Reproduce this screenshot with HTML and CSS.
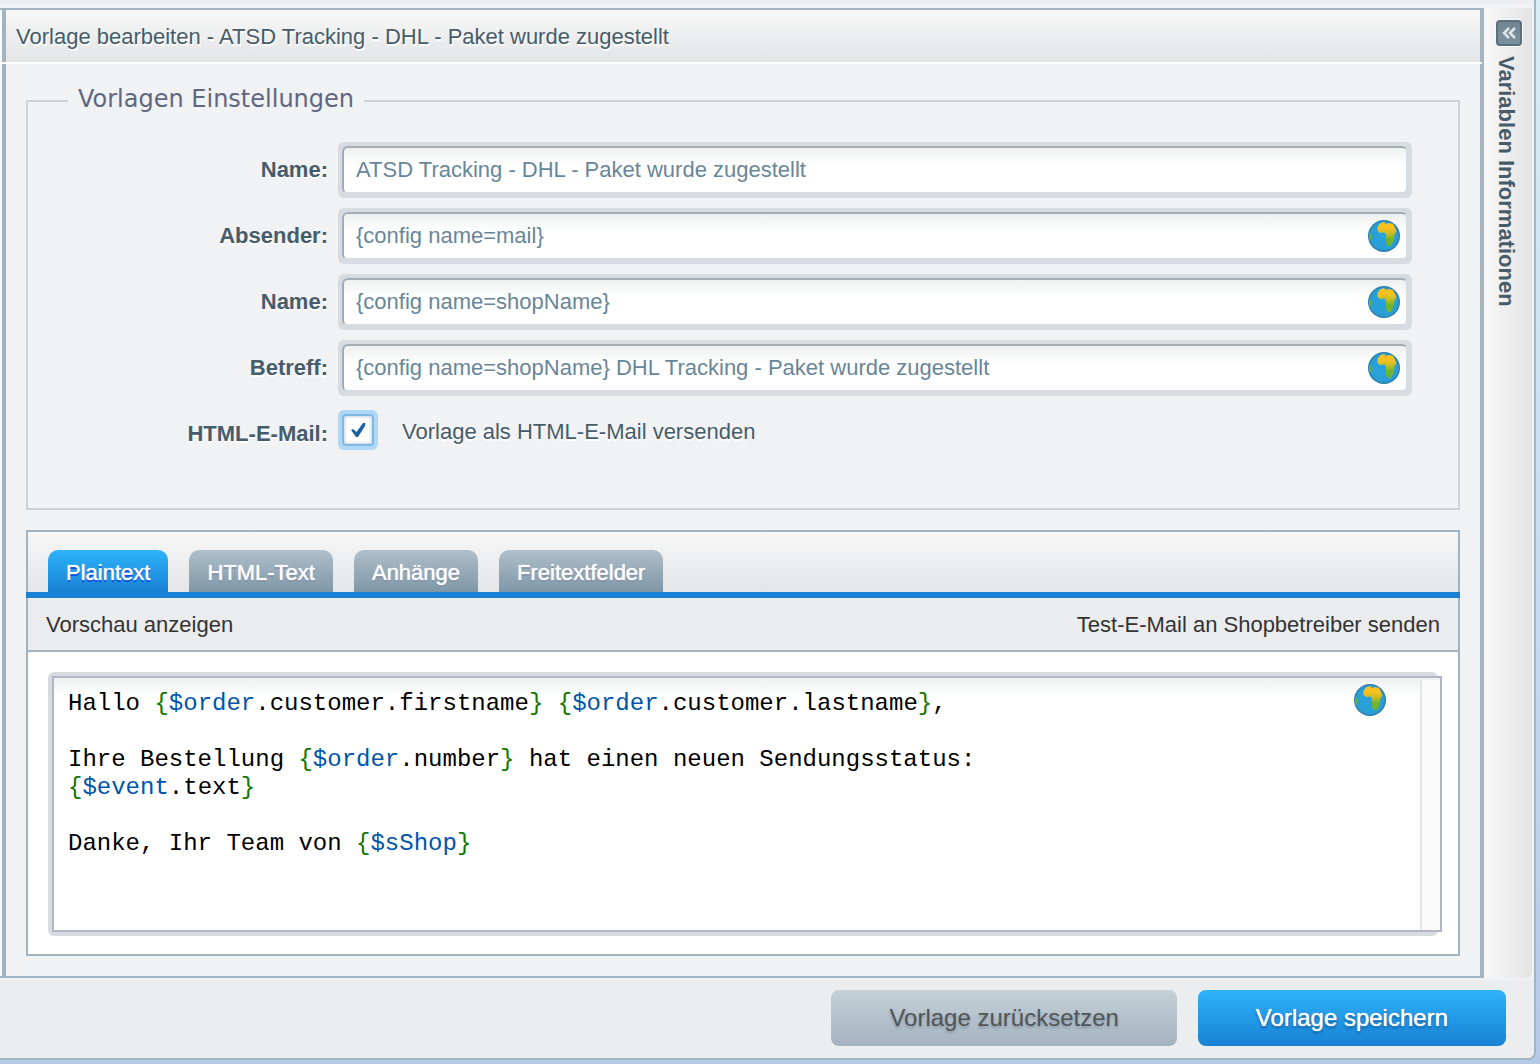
FILE: index.html
```html
<!DOCTYPE html>
<html lang="de">
<head>
<meta charset="utf-8">
<meta name="viewport" content="width=device-width, initial-scale=1">
<title>Vorlage bearbeiten</title>
<link rel="stylesheet" href="styles.css">
</head>
<body>
<svg class="defs" aria-hidden="true">
  <defs>
    <radialGradient id="sea" cx="50%" cy="50%" r="50%">
      <stop offset="0" stop-color="#27a3dc"/>
      <stop offset="0.85" stop-color="#2a9dd6"/>
      <stop offset="1" stop-color="#2b789f"/>
    </radialGradient>
    <linearGradient id="land" x1="0" y1="0" x2="0" y2="1">
      <stop offset="0.25" stop-color="#f8c120"/>
      <stop offset="0.45" stop-color="#cdbd22"/>
      <stop offset="0.7" stop-color="#6fb52c"/>
    </linearGradient>
    <symbol id="globe" viewBox="0 0 32 32">
      <circle cx="16" cy="16" r="16" fill="url(#sea)"/>
      <path fill="url(#land)" d="M9.500 7 L12 3.500 L16 2 L18 4 L21 3 L25 4 L27 8 L28.500 11.500 L26.500 14 L26 19 L24 24 L22 26.500 L19 25.500 L18 22 L18 15 L16.500 12.500 L12 13 L9.500 11 Z"/>
      <path fill="#5fae4a" d="M1 13 L3 14 L4.500 17 L3 20 L1 21 Z"/>
    </symbol>
  </defs>
</svg>
<div class="window">
  <div class="workspace">
    <main class="panel">
      <div class="panel-inner">
        <h1 class="panel-title">Vorlage bearbeiten - ATSD Tracking - DHL - Paket wurde zugestellt</h1>
        <form class="panel-body" id="template-form">
          <fieldset class="settings">
            <legend>Vorlagen Einstellungen</legend>
            <div class="row">
              <label class="row-label" for="name">Name:</label>
              <div class="field"><input class="field-input" id="name" type="text" value="ATSD Tracking - DHL - Paket wurde zugestellt"></div>
            </div>
            <div class="row">
              <label class="row-label" for="sender">Absender:</label>
              <div class="field"><input class="field-input" id="sender" type="text" value="{config name=mail}"><svg class="globe field-globe"><use href="#globe"/></svg></div>
            </div>
            <div class="row">
              <label class="row-label" for="sender-name">Name:</label>
              <div class="field"><input class="field-input" id="sender-name" type="text" value="{config name=shopName}"><svg class="globe field-globe"><use href="#globe"/></svg></div>
            </div>
            <div class="row">
              <label class="row-label" for="subject">Betreff:</label>
              <div class="field"><input class="field-input" id="subject" type="text" value="{config name=shopName} DHL Tracking - Paket wurde zugestellt"><svg class="globe field-globe"><use href="#globe"/></svg></div>
            </div>
            <div class="row">
              <label class="row-label" for="html-mail">HTML-E-Mail:</label>
              <div class="check-row">
                <span class="check">
                  <input class="check-input" id="html-mail" type="checkbox" checked>
                  <svg class="check-mark" viewBox="0 0 16 18"><path d="M1 9 L3 8 L6.500 11 L13 2 L15.500 2 L15 5 L8 16 L6 16 Z" fill="#1c62a0"/></svg>
                </span>
                <label class="check-text" for="html-mail">Vorlage als HTML-E-Mail versenden</label>
              </div>
            </div>
          </fieldset>
          <section class="tabs">
            <div class="tab-bar" role="tablist">
              <button class="tab tab-active" type="button" role="tab" aria-selected="true">Plaintext</button>
              <button class="tab" type="button" role="tab" aria-selected="false">HTML-Text</button>
              <button class="tab" type="button" role="tab" aria-selected="false">Anhänge</button>
              <button class="tab" type="button" role="tab" aria-selected="false">Freitextfelder</button>
            </div>
            <div class="toolbar">
              <button class="tool" type="button">Vorschau anzeigen</button>
              <button class="tool" type="button">Test-E-Mail an Shopbetreiber senden</button>
            </div>
            <div class="tab-page">
              <div class="editor-frame">
                <div class="editor">
                  <div class="code" contenteditable="true" role="textbox" aria-multiline="true" aria-label="Plaintext" spellcheck="false">
                    <div class="line">Hallo <b>{</b><i>$order</i>.customer.firstname<b>}</b> <b>{</b><i>$order</i>.customer.lastname<b>}</b>,</div>
                    <div class="line"></div>
                    <div class="line">Ihre Bestellung <b>{</b><i>$order</i>.number<b>}</b> hat einen neuen Sendungsstatus:</div>
                    <div class="line"><b>{</b><i>$event</i>.text<b>}</b></div>
                    <div class="line"></div>
                    <div class="line">Danke, Ihr Team von <b>{</b><i>$sShop</i><b>}</b></div>
                  </div>
                  <svg class="globe editor-globe"><use href="#globe"/></svg>
                  <div class="scroll-track"></div>
                </div>
              </div>
            </div>
          </section>
        </form>
      </div>
    </main>
    <aside class="side">
      <button class="expand" type="button" aria-label="Variablen Informationen öffnen">
        <svg class="expand-icon" viewBox="0 0 14 12"><path d="M7 1 L2 6 L7 11 M13 1 L8 6 L13 11" fill="none" stroke="#dde4e8" stroke-width="2.600"/></svg>
      </button>
      <h2 class="side-title">Variablen Informationen</h2>
    </aside>
  </div>
  <footer class="actions">
    <button class="action action-reset" type="reset" form="template-form">Vorlage zurücksetzen</button>
    <button class="action action-save" type="submit" form="template-form">Vorlage speichern</button>
  </footer>
</div>
</body>
</html>
```
FILE: styles.css
```css
* { box-sizing: border-box; }

body {
  margin: 0;
  min-height: 100vh;
  display: flex;
  padding: 0 4px 4px 0;
  background: linear-gradient(#d6edf5, #c3dcf2 60%, #b2cae4);
  font-family: "Liberation Sans", Arial, sans-serif;
  font-size: 22px;
  line-height: 26px;
  color: #475c6a;
}

button, input { font: inherit; }

.defs { position: absolute; width: 0; height: 0; }

.window {
  flex: 1;
  min-width: 0;
  display: flex;
  flex-direction: column;
  background: #f0f2f4;
  border: 2px solid #a2b4c1;
  border-width: 0 2px 2px 0;
  border-bottom-right-radius: 8px;
}

.window::before {
  content: "";
  height: 4px;
  background: #ebedef;
}

.workspace {
  flex: 1;
  display: flex;
  padding: 4px 2px 2px 0;
}

/* Main panel */
.panel {
  flex: 1;
  min-width: 0;
  display: flex;
  padding-left: 2px;
  background: #f9fafa;
  border: solid #a2b4c1;
  border-width: 2px 4px 2px 0;
}

.panel-inner {
  flex: 1;
  min-width: 0;
  display: flex;
  flex-direction: column;
  border-left: 4px solid #a2b4c1;
  background: #f0f2f4;
}

.panel-title {
  position: relative;
  margin: 0;
  padding: 14px 10px;
  font-size: 22px;
  font-weight: 400;
  background: linear-gradient(#f7f7f7, #e3e4e6);
  text-shadow: 1px 2px 0 #fff;
}

.panel-title::after {
  content: "";
  position: absolute;
  top: 52px;
  left: -6px;
  right: -2px;
  height: 2px;
  background: #fff;
}

.panel-body {
  flex: 1;
  display: flex;
  flex-direction: column;
  gap: 20px;
  padding: 20px;
}

.settings {
  margin: 0;
  min-width: 0;
  padding: 24px 46px 54px 40px;
  border: 2px solid #cdd3d9;
}

.settings legend {
  padding: 0 10px 4px;
  font-family: "DejaVu Sans", Verdana, sans-serif;
  font-size: 24px;
  line-height: 30px;
  color: #626680;
}

.row {
  display: grid;
  grid-template-columns: 260px 1fr;
  column-gap: 10px;
  margin-bottom: 10px;
}

.row:last-child { margin-bottom: 0; }

.row-label {
  padding-top: 15px;
  font-weight: 700;
  text-align: right;
  text-shadow: 0 2px 0 #fff;
}

.field {
  display: grid;
  align-items: center;
  height: 56px;
  padding: 4px;
  border-radius: 6px;
  background: #d7dce2;
}

.field-input {
  grid-area: 1 / 1;
  width: 100%;
  height: 48px;
  padding: 0 60px 0 12px;
  border: 2px solid #a2adb6;
  border-right-color: #d7dce2;
  border-bottom-color: #d7dce2;
  border-radius: 6px;
  background: linear-gradient(#eef0f0, #fff 18px);
  color: #688699;
  outline: 0;
}

.globe { display: block; width: 32px; height: 32px; }

.field-globe {
  grid-area: 1 / 1;
  justify-self: end;
  margin-right: 8px;
}

.check-row {
  display: flex;
  align-items: center;
  gap: 24px;
  height: 48px;
}

.check {
  display: grid;
  place-items: center;
  width: 40px;
  height: 40px;
  border-radius: 6px;
  background: #afd8f6;
}

.check-input {
  grid-area: 1 / 1;
  appearance: none;
  width: 32px;
  height: 32px;
  margin: 0;
  border: 2px solid #80b9e4;
  border-radius: 4px;
  background: #fff;
  box-shadow: inset 0 0 3px 1px #c9d3de;
}

.check-mark {
  grid-area: 1 / 1;
  width: 16px;
  height: 18px;
  visibility: hidden;
  pointer-events: none;
}

.check-input:checked + .check-mark { visibility: visible; }

.check-text {
  padding-top: 4px;
  text-shadow: 0 2px 0 #fff;
}

/* Tabs */
.tabs {
  flex: 1;
  display: flex;
  flex-direction: column;
  border: 2px solid #a2b4c1;
  background: #fff;
}

.tab-bar {
  display: flex;
  gap: 21px;
  margin: 0 -2px;
  padding: 18px 22px 0;
  border-bottom: 6px solid #1881d4;
  background: linear-gradient(#a2b4c1, #a2b4c1) left / 2px 100% no-repeat,
    linear-gradient(#a2b4c1, #a2b4c1) right / 2px 100% no-repeat,
    linear-gradient(#f7f7f7, #e4e5e7);
}

.tab {
  height: 42px;
  padding: 4px 18px 0;
  border: 0;
  border-radius: 10px 10px 0 0;
  background: linear-gradient(#b0bfca, #7e97a7);
  color: #fff;
  text-shadow: 0 0 1px #fff, 0 2px 0 #8391aa;
}

.tab-active {
  background: linear-gradient(#2eb3fa, #1881d4);
  text-shadow: 0 0 1px #fff, 0 2px 0 #0b49df;
}

.toolbar {
  display: flex;
  justify-content: space-between;
  padding: 14px 18px 12px;
  border-bottom: 2px solid #a2b4c1;
  background: #ebecee;
}

.tool {
  padding: 0;
  border: 0;
  background: none;
  color: #333;
}

.tab-page {
  flex: 1;
  display: flex;
  padding: 20px 20px 18px;
}

/* Code editor: the surface runs past the right edge of its frame */
.editor-frame {
  flex: 1;
  min-width: 0;
  display: flex;
  padding: 4px 0 4px 4px;
  border-radius: 6px;
  background: #d7dce2;
}

.editor {
  position: relative;
  flex: 1;
  min-width: 0;
  display: flex;
  margin-right: -4px;
  border: 2px solid #b1b5c5;
  background: linear-gradient(#eef0f0, #fff 18px);
}

.code {
  flex: 1;
  min-width: 0;
  padding: 12px 14px;
  overflow: hidden;
  outline: 0;
  font: 24px/28px "Liberation Mono", "Courier New", monospace;
  color: #000;
}

.line {
  min-height: 28px;
  white-space: pre-wrap;
}

.line b { font-weight: 400; color: #117700; }
.line i { font-style: normal; color: #0055aa; }

.editor-globe {
  position: absolute;
  top: 6px;
  right: 54px;
}

.scroll-track {
  width: 20px;
  margin-top: 2px;
  border-left: 2px solid #e6e6e6;
  background: #fafafa;
}

/* Collapsed side panel */
.side {
  width: 48px;
  display: flex;
  flex-direction: column;
  align-items: flex-start;
  gap: 10px;
  padding: 12px 0 0 10px;
  border-bottom-right-radius: 6px;
  background: linear-gradient(to right, #f8f8f8, #e3e3e4);
}

.expand {
  display: grid;
  place-items: center;
  width: 26px;
  height: 26px;
  margin-left: 2px;
  padding: 0;
  border: 2px solid #5c6e7b;
  border-radius: 4px;
  background: linear-gradient(#708491, #7b909e);
  box-shadow: 0 0 0 1px #f6f8f9;
}

.expand-icon { width: 14px; height: 12px; }

.side-title {
  margin: 0;
  font-size: 22px;
  line-height: 24px;
  writing-mode: vertical-rl;
}

/* Footer */
.actions {
  display: flex;
  justify-content: flex-end;
  gap: 21px;
  padding: 10px 28px 12px;
  background: #ebedee;
  border-bottom-right-radius: 6px;
}

.action {
  height: 56px;
  padding: 0 58px;
  border: 0;
  border-radius: 8px;
  font-size: 24px;
}

.action-reset {
  background: linear-gradient(#c5d1d8, #a4b3c0);
  color: #525557;
  text-shadow: 0 2px 3px #8593a3;
}

.action-save {
  background: linear-gradient(#2eb3fa, #1881d4);
  color: #fff;
  text-shadow: 0 0 1px #fff, 0 2px 3px #0d5595;
}
```
